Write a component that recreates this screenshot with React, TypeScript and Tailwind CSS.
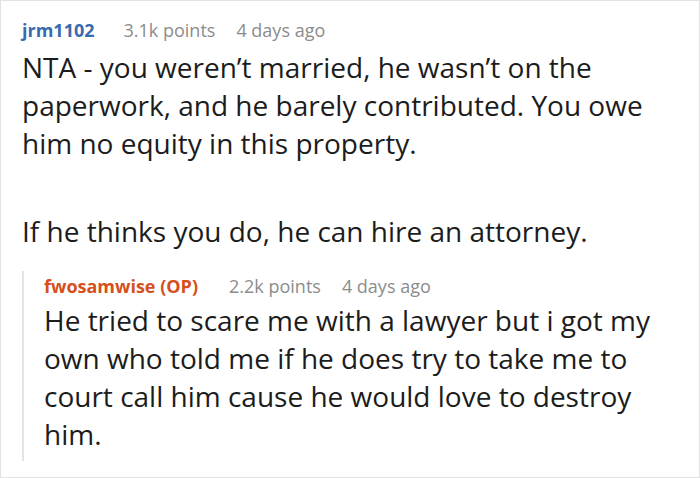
export default function App() {
  return (
    <div className="w-[700px] h-[478px] border border-[#e2e2e2] bg-white pl-[21px] pt-[14px] font-['Open_Sans',sans-serif] text-[#1c1c1c]">
      <div className="flex items-baseline text-[18px] leading-[30px]">
        <span className="font-bold text-[#3a6ab0]">jrm1102</span>
        <span className="ml-[29px] text-[#8c8c8c]">3.1k points</span>
        <span className="ml-[21px] text-[#8c8c8c]">4 days ago</span>
      </div>
      <div className="mt-[3px] text-[28px] leading-[38px] pr-[40px]">
        <p>NTA - you weren’t married, he wasn’t on the paperwork, and he barely contributed. You owe him no equity in this property.</p>
        <p className="mt-[50px]">If he thinks you do, he can hire an attorney.</p>
      </div>
      <div className="mt-[35px] border-l-2 border-[#e4e4e4] pl-[20px] pb-[8px]">
        <div className="-mt-[14px] flex items-baseline text-[18px] leading-[30px]">
          <span className="font-bold text-[#d4501c]">fwosamwise (OP)</span>
          <span className="ml-[31px] text-[#8c8c8c]">2.2k points</span>
          <span className="ml-[21px] text-[#8c8c8c]">4 days ago</span>
        </div>
        <p className="text-[28px] leading-[38px] pr-[40px]">
          He tried to scare me with a lawyer but i got my own who told me if he does try to take me to court call him cause he would love to destroy him.
        </p>
      </div>
    </div>
  );
}
